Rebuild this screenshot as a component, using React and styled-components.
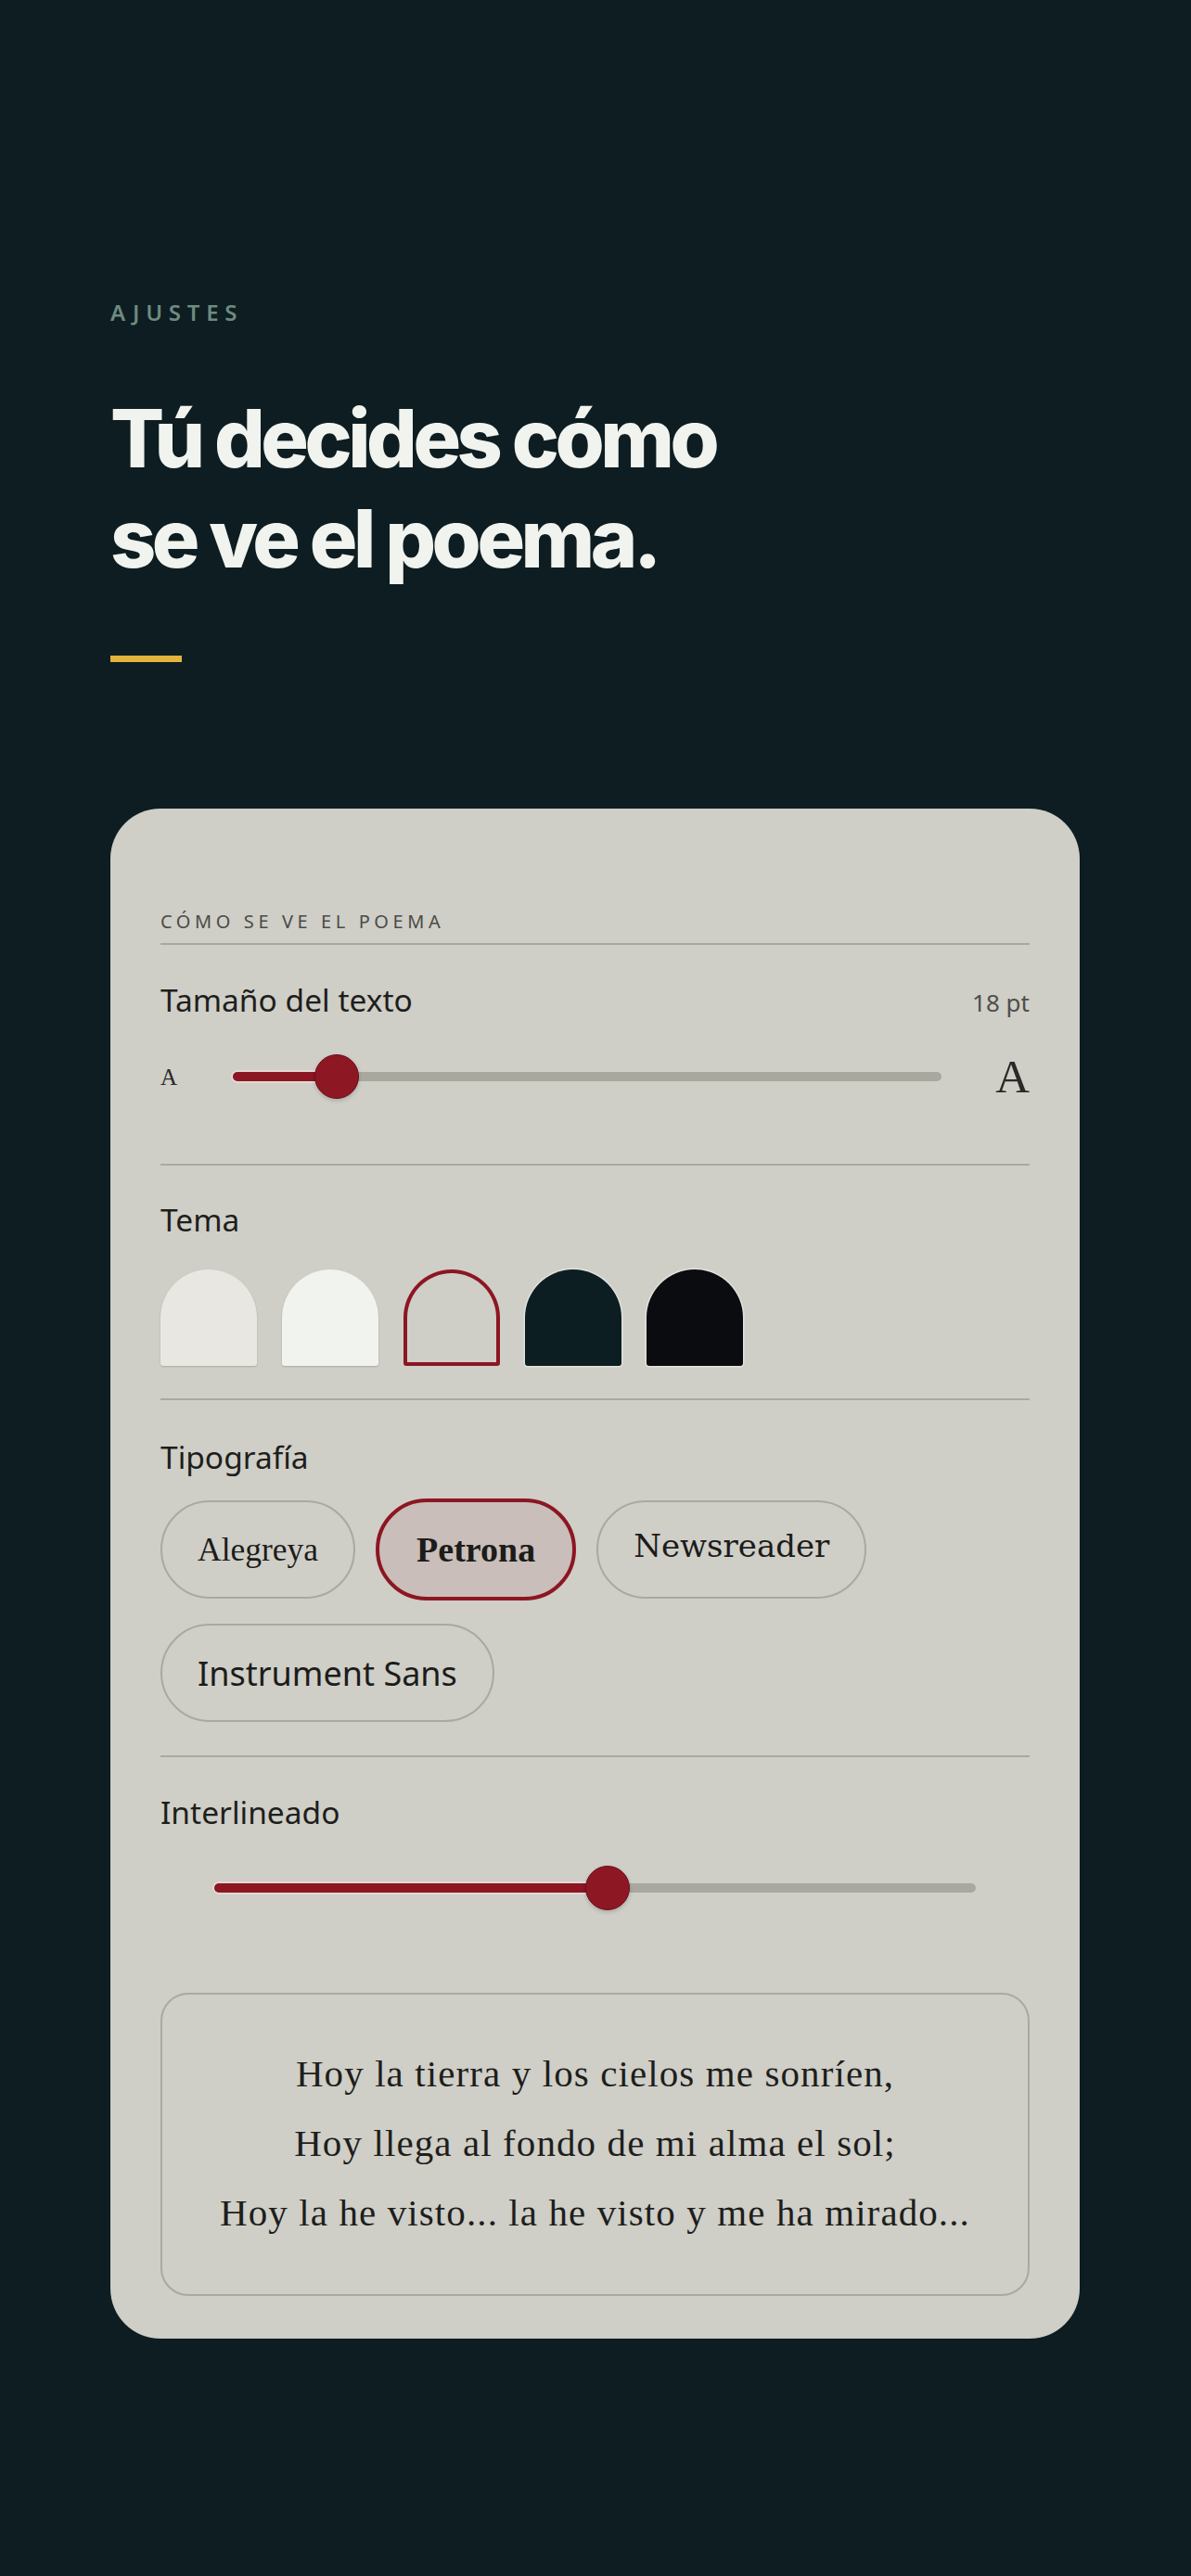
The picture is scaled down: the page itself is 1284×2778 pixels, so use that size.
import React from 'react';
import styled, { createGlobalStyle } from 'styled-components';

const GlobalStyle = createGlobalStyle`
  html, body {
    margin: 0;
    padding: 0;
    background: #0d1d21;
  }
  * {
    box-sizing: border-box;
  }
`;

const RED = '#8c1622';
const LINE = '#aaa9a1';

const Page = styled.main`
  min-height: 2778px;
  padding: 322px 120px 0 119px;
  background: #0d1d21;
`;

const Eyebrow = styled.div`
  font-family: 'Noto Sans', sans-serif;
  font-weight: 600;
  font-size: 24px;
  line-height: 30px;
  letter-spacing: 0.28em;
  color: #6e8a80;
`;

const Headline = styled.h1`
  margin: 67px 0 0;
  font-family: Inter, sans-serif;
  font-weight: 800;
  font-size: 86px;
  line-height: 108px;
  letter-spacing: -0.052em;
  color: #f0f3ee;
`;

const AccentBar = styled.div`
  width: 77px;
  height: 7px;
  margin-top: 72px;
  background: #e3b33d;
`;

const Card = styled.section`
  margin-top: 158px;
  background: #cfcec7;
  border-radius: 54px;
  padding: 110px 54px 46px;
`;

const CardLabel = styled.div`
  font-family: 'Noto Sans', sans-serif;
  font-size: 20px;
  line-height: 24px;
  letter-spacing: 0.23em;
  color: #4b4b48;
  padding-bottom: 11px;
  border-bottom: 2px solid ${LINE};
`;

const Section = styled.div`
  display: flex;
  flex-direction: column;
  gap: ${(p) => p.$gap}px;
  padding: ${(p) => p.$top}px 0 ${(p) => p.$bottom}px;
  border-bottom: ${(p) => (p.$last ? 'none' : `2px solid ${LINE}`)};
`;

const SectionHead = styled.div`
  display: flex;
  justify-content: space-between;
  align-items: baseline;
`;

const SectionTitle = styled.span`
  font-family: 'Noto Sans', sans-serif;
  font-size: 33.5px;
  line-height: 40px;
  color: #1e1e1c;
`;

const SectionValue = styled.span`
  font-family: 'Noto Sans', sans-serif;
  font-size: 26px;
  color: #4e4e4a;
`;

const SliderRow = styled.div`
  display: flex;
  align-items: center;
  gap: 58px;
  height: 50px;
`;

const SizeGlyph = styled.span`
  font-family: 'Liberation Serif', serif;
  font-size: ${(p) => p.$size}px;
  line-height: 1;
  color: #2a2a28;
  width: ${(p) => (p.$size > 30 ? 37 : 20)}px;
  text-align: ${(p) => (p.$size > 30 ? 'right' : 'left')};
`;

const Track = styled.div`
  position: relative;
  flex: 1;
  height: 10px;
  margin: ${(p) => (p.$inset ? '0 58px' : '0')};
  border-radius: 5px;
  background: #a9a89f;
`;

const TrackFill = styled.div`
  position: absolute;
  left: 0;
  top: 0;
  height: 100%;
  border-radius: 5px;
  background: ${RED};
  box-shadow: 0 0 0 2px rgba(242, 226, 220, 0.55);
`;

const Thumb = styled.div`
  position: absolute;
  top: 50%;
  width: 48px;
  height: 48px;
  border-radius: 50%;
  background: #8d1723;
  border: 1px solid #6c0f19;
  transform: translate(-50%, -50%);
  box-shadow: 0 2px 4px rgba(0, 0, 0, 0.18);
`;

const Swatches = styled.div`
  display: flex;
  gap: 27px;
`;

const Swatch = styled.div`
  width: 104px;
  height: 104px;
  border-radius: 52px 52px 3px 3px;
  background: ${(p) => (p.$active ? 'transparent' : p.$color)};
  border: ${(p) => (p.$active ? `4px solid ${RED}` : 'none')};
  box-shadow: ${(p) =>
    p.$active
      ? 'none'
      : p.$dark
      ? '0 0 0 1.5px #e2e2dc'
      : '0 1px 2px rgba(0, 0, 0, 0.18)'};
`;

const Chips = styled.div`
  display: flex;
  flex-wrap: wrap;
  gap: 27px 22px;
`;

const Chip = styled.button`
  height: ${(p) => (p.$active ? 110 : 106)}px;
  margin: ${(p) => (p.$active ? '-2px 0' : '0')};
  padding: 0 ${(p) => (p.$active ? 40 : 38)}px ${(p) => p.$lift || 0}px;
  border-radius: 56px;
  border: ${(p) => (p.$active ? `4px solid ${RED}` : `2px solid ${LINE}`)};
  background: ${(p) => (p.$active ? '#c9beb9' : 'transparent')};
  font-family: ${(p) => p.$font};
  font-size: ${(p) => p.$size}px;
  font-weight: ${(p) => p.$weight || 400};
  color: #1c1c1a;
  display: flex;
  align-items: center;
  cursor: pointer;
`;

const PoemBox = styled.div`
  margin-top: 88px;
  border: 2px solid ${LINE};
  border-radius: 30px;
  padding: 48px 20px 50px;
  text-align: center;
`;

const PoemLine = styled.p`
  margin: 0;
  font-family: 'Liberation Serif', serif;
  font-size: 41px;
  line-height: 75px;
  letter-spacing: 1.1px;
  color: #1e1e1c;
`;

const themes = [
  { color: '#e8e7e2' },
  { color: '#f1f3ef' },
  { color: '#cfcec7', active: true },
  { color: '#0c1e22', dark: true },
  { color: '#0a0c0f', dark: true },
];

const fonts = [
  { name: 'Alegreya', font: "'Liberation Serif', serif", size: 35.5 },
  { name: 'Petrona', font: "'Liberation Serif', serif", size: 38, weight: 700, active: true },
  { name: 'Newsreader', font: "'DejaVu Serif', serif", size: 34, lift: 8 },
  { name: 'Instrument Sans', font: "'Noto Sans', sans-serif", size: 36 },
];

const poem = [
  'Hoy la tierra y los cielos me sonríen,',
  'Hoy llega al fondo de mi alma el sol;',
  'Hoy la he visto... la he visto y me ha mirado...',
];

function Slider({ value, inset }) {
  return (
    <Track $inset={inset}>
      <TrackFill style={{ width: `${value}%` }} />
      <Thumb style={{ left: `${value}%` }} />
    </Track>
  );
}

export default function App() {
  return (
    <>
      <GlobalStyle />
      <Page>
        <Eyebrow>AJUSTES</Eyebrow>
        <Headline>
          Tú decides cómo
          <br />
          se ve el poema.
        </Headline>
        <AccentBar />

        <Card>
          <CardLabel>CÓMO SE VE EL POEMA</CardLabel>

          <Section $top={39} $bottom={69} $gap={37}>
            <SectionHead>
              <SectionTitle>Tamaño del texto</SectionTitle>
              <SectionValue>18 pt</SectionValue>
            </SectionHead>
            <SliderRow>
              <SizeGlyph $size={25}>A</SizeGlyph>
              <Slider value={14.6} />
              <SizeGlyph $size={51}>A</SizeGlyph>
            </SliderRow>
          </Section>

          <Section $top={38} $bottom={35} $gap={34}>
            <SectionHead>
              <SectionTitle>Tema</SectionTitle>
            </SectionHead>
            <Swatches>
              {themes.map((t, i) => (
                <Swatch key={i} $color={t.color} $active={t.active} $dark={t.dark} />
              ))}
            </Swatches>
          </Section>

          <Section $top={41} $bottom={36} $gap={27}>
            <SectionHead>
              <SectionTitle>Tipografía</SectionTitle>
            </SectionHead>
            <Chips>
              {fonts.map((f) => (
                <Chip
                  key={f.name}
                  $font={f.font}
                  $size={f.size}
                  $weight={f.weight}
                  $active={f.active}
                  $lift={f.lift}
                >
                  {f.name}
                </Chip>
              ))}
            </Chips>
          </Section>

          <Section $top={39} $bottom={0} $gap={37} $last>
            <SectionHead>
              <SectionTitle>Interlineado</SectionTitle>
            </SectionHead>
            <SliderRow>
              <Slider value={51.6} inset />
            </SliderRow>
          </Section>

          <PoemBox>
            {poem.map((line) => (
              <PoemLine key={line}>{line}</PoemLine>
            ))}
          </PoemBox>
        </Card>
      </Page>
    </>
  );
}
